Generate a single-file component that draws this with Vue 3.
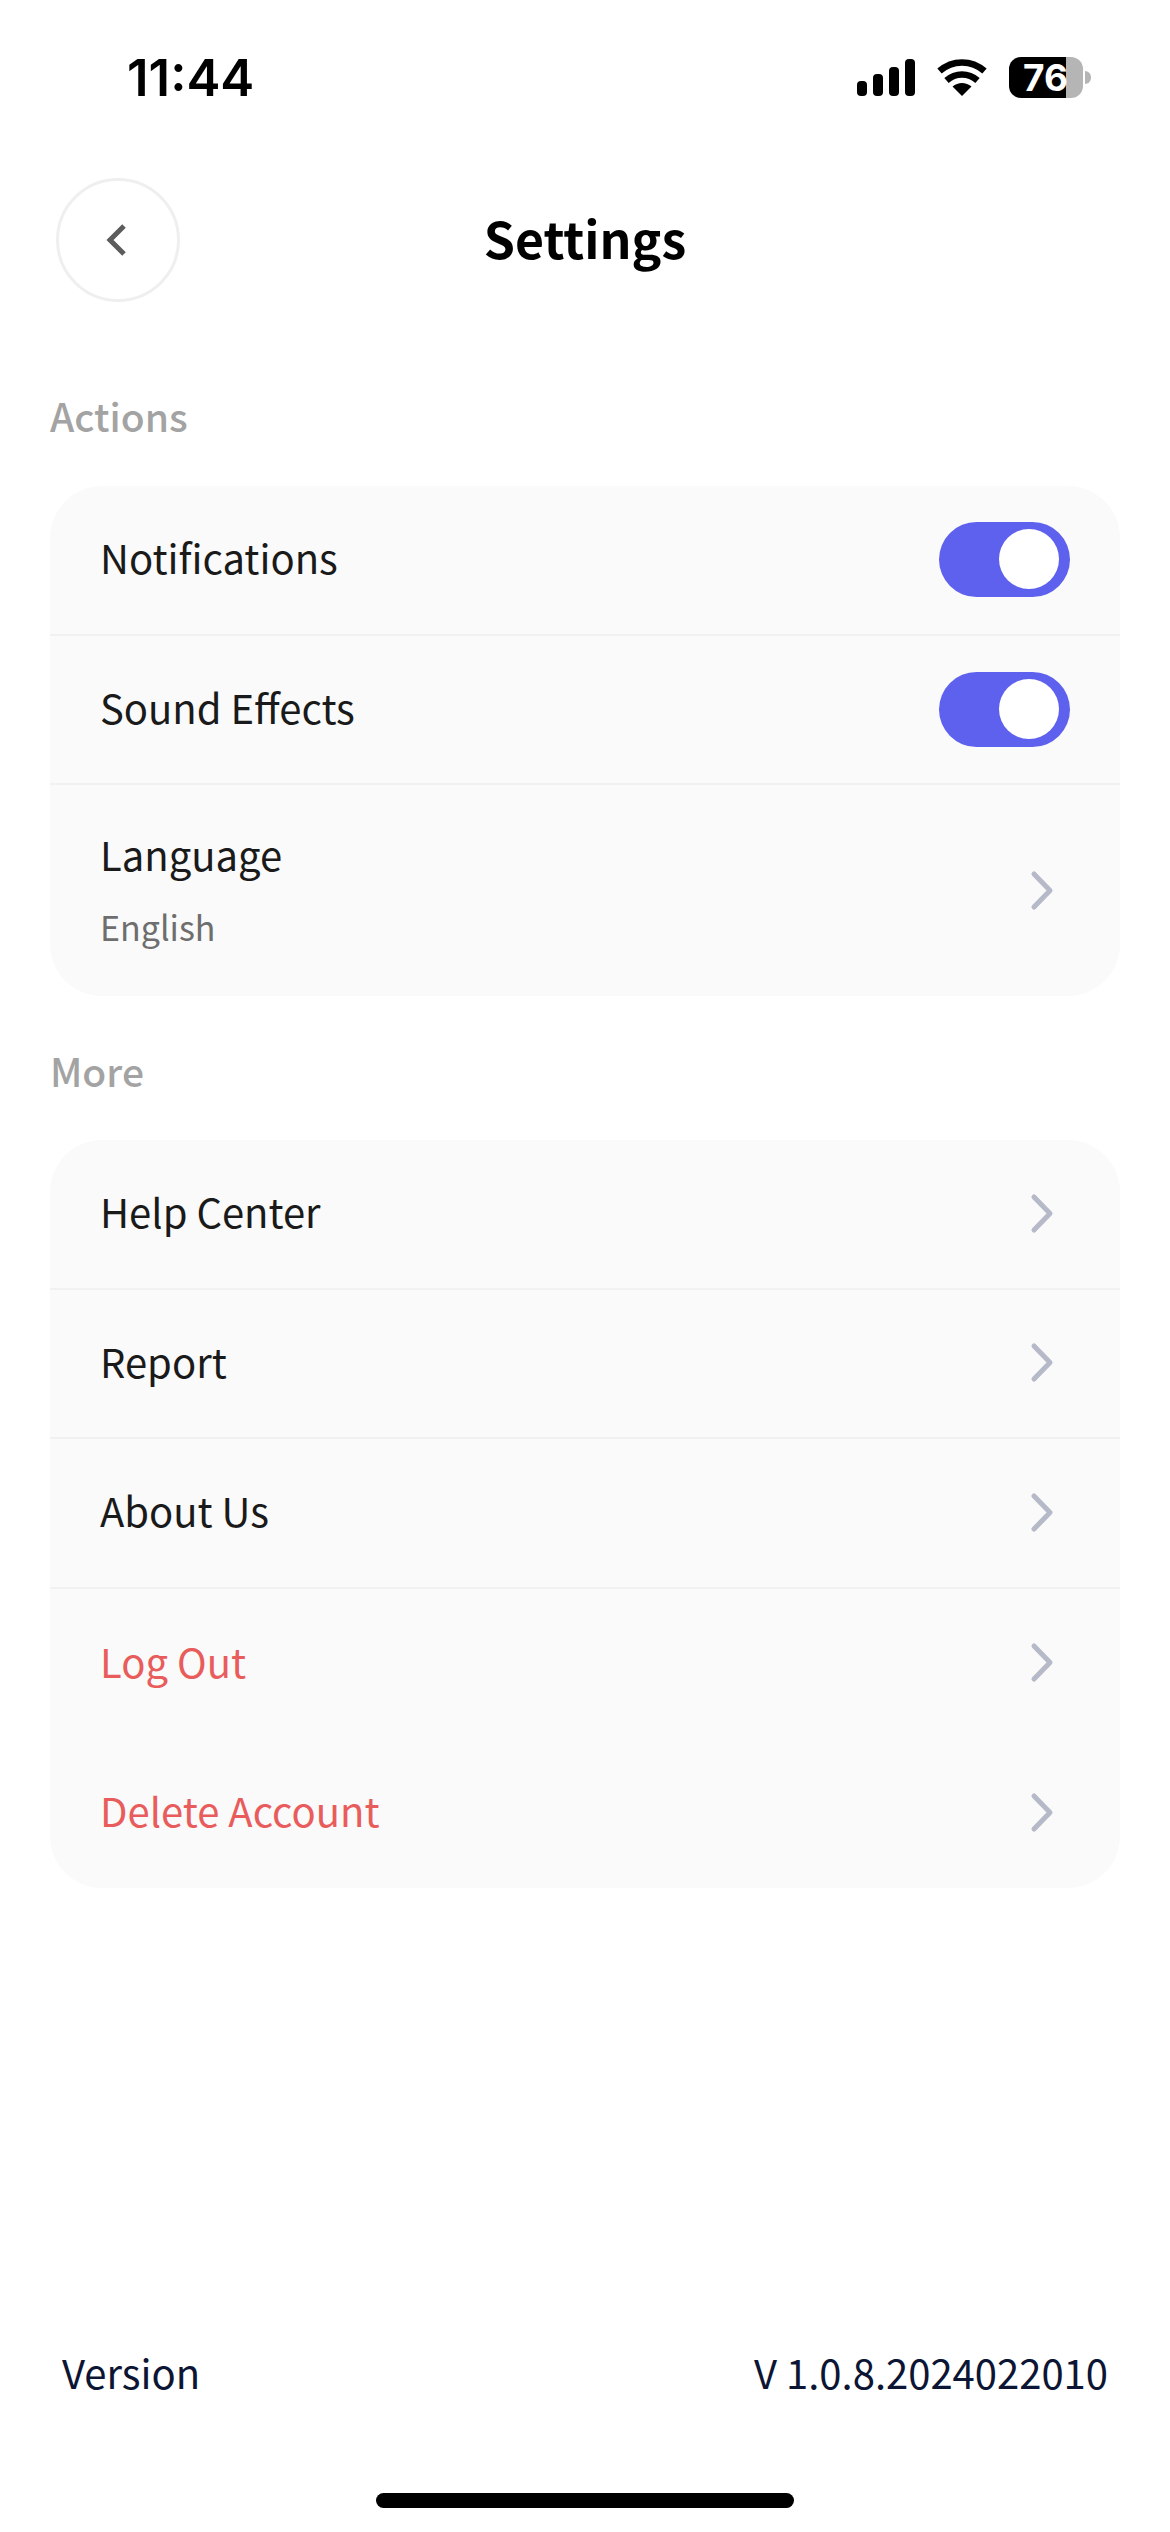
<template>
  <div class="page">
    <div class="status-bar">
      <span class="time">11:44</span>
      <div class="status-icons">
        <svg class="signal" width="58" height="37" viewBox="0 0 58 37">
          <rect x="0" y="22" width="10" height="15" rx="4" />
          <rect x="16" y="15" width="10" height="22" rx="4" />
          <rect x="32" y="8" width="10" height="29" rx="4" />
          <rect x="48" y="0" width="10" height="37" rx="4" />
        </svg>
        <svg class="wifi" width="50" height="37" viewBox="0 0 50 37">
          <path d="M25 37 L15.5 27.5 C21 22.8 29 22.8 34.5 27.5 Z" />
          <path d="M9.5 21.5 C18.5 13.5 31.5 13.5 40.5 21.5" fill="none" stroke="#000" stroke-width="6.5" />
          <path d="M2.5 12 C15.5 0.5 34.5 0.5 47.5 12" fill="none" stroke="#000" stroke-width="6.5" />
        </svg>
        <div class="battery">
          <div class="battery-body">76</div>
          <div class="battery-nub"></div>
        </div>
      </div>
    </div>

    <header class="nav">
      <button class="back">
        <svg width="24" height="38" viewBox="0 0 24 38" fill="none">
          <path d="M20 5 L6 19 L20 33" stroke="#5c5c5c" stroke-width="5" />
        </svg>
      </button>
      <h1 class="title">Settings</h1>
    </header>

    <main class="content">
      <section v-for="group in groups" :key="group.title" class="group">
        <h2 class="group-title">{{ group.title }}</h2>
        <div class="card">
          <div v-for="item in group.items" :key="item.label"
            class="row" :class="{ tall: item.sub, 'no-line': item.noLine }">
            <div class="row-text">
              <span class="label" :class="{ danger: item.danger }">{{ item.label }}</span>
              <span v-if="item.sub" class="sub">{{ item.sub }}</span>
            </div>
            <div v-if="item.toggle" class="toggle">
              <div class="knob"></div>
            </div>
            <svg v-else class="chevron" width="26" height="42" viewBox="0 0 26 42" fill="none">
              <path d="M5 4 L21 20.5 L5 37" stroke="#b6b9c7" stroke-width="5"
                stroke-linecap="round" stroke-linejoin="round" />
            </svg>
          </div>
        </div>
      </section>
    </main>

    <footer class="version">
      <span>Version</span>
      <span>V 1.0.8.2024022010</span>
    </footer>
    <div class="home-bar"></div>
  </div>
</template>

<script setup>
const groups = [
  {
    title: 'Actions',
    items: [
      { label: 'Notifications', toggle: true },
      { label: 'Sound Effects', toggle: true },
      { label: 'Language', sub: 'English' }
    ]
  },
  {
    title: 'More',
    items: [
      { label: 'Help Center' },
      { label: 'Report' },
      { label: 'About Us' },
      { label: 'Log Out', danger: true, noLine: true },
      { label: 'Delete Account', danger: true }
    ]
  }
]
</script>

<style>
html, body {
  margin: 0;
  background: #ffffff;
}
</style>

<style scoped>
.page {
  width: 1170px;
  height: 2532px;
  display: flex;
  flex-direction: column;
  font-family: "Noto Sans CJK SC", "Noto Sans", sans-serif;
  background: #ffffff;
  overflow: hidden;
}

.status-bar {
  height: 166px;
  box-sizing: border-box;
  padding: 57px 79px 0 127px;
  display: flex;
  justify-content: space-between;
  align-items: flex-start;
  flex-shrink: 0;
}

.time {
  font-family: Inter, sans-serif;
  font-size: 51px;
  font-weight: 600;
  line-height: 41px;
  color: #000;
}

.status-icons {
  display: flex;
  align-items: center;
  gap: 22px;
}

.battery {
  display: flex;
  align-items: center;
  gap: 2px;
}

.battery-body {
  width: 74px;
  height: 41px;
  box-sizing: border-box;
  padding-left: 14px;
  border-radius: 12px;
  background: linear-gradient(to right, #000 0 57px, #b5b5b5 57px);
  color: #fff;
  font-family: Inter, sans-serif;
  font-size: 37px;
  font-weight: 700;
  line-height: 41px;
}

.battery-nub {
  width: 6px;
  height: 13px;
  border-radius: 0 6px 6px 0;
  background: #b5b5b5;
}

.nav {
  position: relative;
  height: 148px;
  padding-left: 56px;
  display: flex;
  align-items: center;
  flex-shrink: 0;
}

.back {
  width: 124px;
  height: 124px;
  padding: 0 4px 0 0;
  border: 3px solid #efefef;
  border-radius: 50%;
  background: #fff;
  display: flex;
  align-items: center;
  justify-content: center;
}

.title {
  position: absolute;
  left: 0;
  right: 0;
  margin: 0;
  padding-bottom: 6px;
  text-align: center;
  font-size: 50px;
  font-weight: 700;
  color: #000;
  pointer-events: none;
}

.content {
  padding: 0 50px;
}

.group-title {
  margin: 0;
  height: 172px;
  padding-top: 72px;
  box-sizing: border-box;
  font-size: 39px;
  font-weight: 500;
  line-height: 58px;
  color: #a3a3a3;
}

.group + .group .group-title {
  height: 144px;
  padding-top: 45px;
}

.card {
  background: #fafafa;
  border-radius: 52px;
  overflow: hidden;
}

.row {
  height: 149.5px;
  box-sizing: border-box;
  padding: 0 50px;
  border-bottom: 2px solid #f1f1f1;
  display: flex;
  align-items: center;
  justify-content: space-between;
}

.row:last-child,
.row.no-line {
  border-bottom: none;
}

.row.tall {
  height: 211px;
}

.row-text {
  display: flex;
  flex-direction: column;
  padding-bottom: 5px;
}

.label {
  font-size: 40px;
  line-height: 60px;
  color: #1a1a1a;
}

.label.danger {
  color: #e95c5c;
}

.sub {
  margin-top: 17px;
  font-size: 34px;
  line-height: 52px;
  color: #6e6e6e;
}

.toggle {
  width: 131px;
  height: 75px;
  box-sizing: border-box;
  padding: 7px 11px;
  border-radius: 38px;
  background: #5e60ee;
  display: flex;
  justify-content: flex-end;
}

.knob {
  width: 60px;
  height: 60px;
  border-radius: 50%;
  background: #fff;
}

.chevron {
  margin-right: 15px;
}

.version {
  margin-top: auto;
  padding: 0 62px;
  display: flex;
  justify-content: space-between;
  font-size: 40px;
  line-height: 60px;
  color: #0c1533;
}

.home-bar {
  width: 418px;
  height: 15px;
  margin: 91px auto 24px;
  border-radius: 8px;
  background: #000;
}
</style>
